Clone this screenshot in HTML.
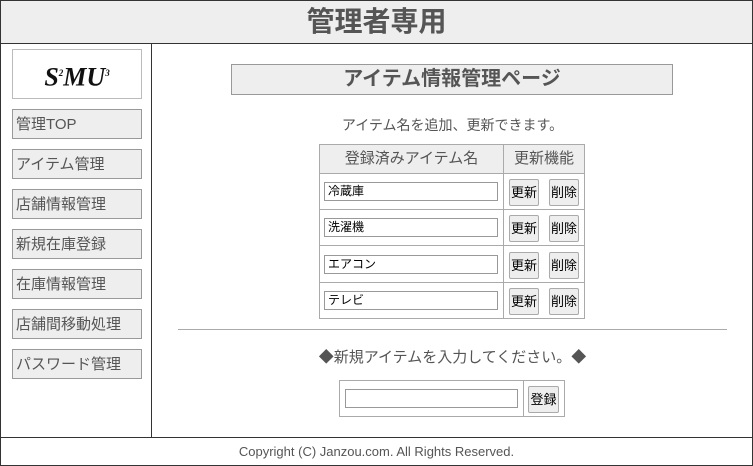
<!DOCTYPE html><html><head><meta charset="utf-8"><style>
*{margin:0;padding:0;box-sizing:border-box}
body{width:753px;height:466px;background:#fff;font-family:"Liberation Sans","Noto Sans CJK JP",sans-serif;color:#555;position:relative;overflow:hidden}
.a{position:absolute}
.nav{position:absolute;left:12px;width:130px;height:30px;background:#eee;border:1px solid #999;font-size:15px;line-height:30px;padding-left:3px;color:#555}
.inp{position:absolute;height:19px;border:1px solid #999;background:#fff;font-size:12px;line-height:17px;padding-left:3px;color:#000}
.btn{position:absolute;height:27px;background:#eee;border:1px solid #aaa;font-size:13px;line-height:25px;text-align:center;color:#000;border-radius:2px}
.ln{position:absolute;background:#aaa}
</style></head><body>
<div class="a" style="left:0;top:0;width:753px;height:466px;border:1px solid #333"></div>
<div class="a" style="left:1px;top:1px;width:751px;height:42px;background:#eee"></div>
<div class="a" style="left:0;top:43px;width:753px;height:1px;background:#333"></div>
<div class="a" style="left:0;top:4px;width:753px;text-align:center;font-size:28px;font-weight:bold;line-height:36px;color:#555">管理者専用</div>
<div class="a" style="left:151px;top:44px;width:1px;height:393px;background:#333"></div>
<div class="a" style="left:0;top:437px;width:753px;height:1px;background:#333"></div>
<div class="a" style="left:0;top:443px;width:753px;text-align:center;font-size:13px;line-height:18px">Copyright (C) Janzou.com. All Rights Reserved.</div>
<div class="a" style="left:12px;top:49px;width:130px;height:50px;border:1px solid #bbb;text-align:center;font:italic bold 26px 'Liberation Serif',serif;color:#111;line-height:46px">S<sup style="font-size:9px">2</sup>MU<sup style="font-size:9px">3</sup></div>
<div class="nav" style="top:109px">管理TOP</div>
<div class="nav" style="top:149px">アイテム管理</div>
<div class="nav" style="top:189px">店舗情報管理</div>
<div class="nav" style="top:229px">新規在庫登録</div>
<div class="nav" style="top:269px">在庫情報管理</div>
<div class="nav" style="top:309px">店舗間移動処理</div>
<div class="nav" style="top:349px">パスワード管理</div>
<div class="a" style="left:231px;top:64px;width:442px;height:31px;background:#eee;border:1px solid #999;text-align:center;font-size:20px;font-weight:bold;line-height:29px">アイテム情報管理ページ</div>
<div class="a" style="left:152px;top:115px;width:601px;text-align:center;font-size:14px;line-height:20px">アイテム名を追加、更新できます。</div>
<div class="a" style="left:319px;top:144px;width:266px;height:175px;border:1px solid #aaa"></div>
<div class="a" style="left:320px;top:145px;width:264px;height:28px;background:#eee"></div>
<div class="ln" style="left:503px;top:144px;width:1px;height:175px"></div>
<div class="ln" style="left:319px;top:173px;width:266px;height:1px"></div>
<div class="ln" style="left:319px;top:209px;width:266px;height:1px"></div>
<div class="ln" style="left:319px;top:245px;width:266px;height:1px"></div>
<div class="ln" style="left:319px;top:282px;width:266px;height:1px"></div>
<div class="a" style="left:320px;top:149px;width:183px;text-align:center;font-size:15px;line-height:20px">登録済みアイテム名</div>
<div class="a" style="left:504px;top:149px;width:80px;text-align:center;font-size:15px;line-height:20px">更新機能</div>
<div class="inp" style="left:324px;top:182px;width:174px">冷蔵庫</div>
<div class="inp" style="left:324px;top:218px;width:174px">洗濯機</div>
<div class="inp" style="left:324px;top:255px;width:174px">エアコン</div>
<div class="inp" style="left:324px;top:291px;width:174px">テレビ</div>
<div class="btn" style="left:509px;top:179px;width:30px">更新</div><div class="btn" style="left:549px;top:179px;width:30px">削除</div>
<div class="btn" style="left:509px;top:215px;width:30px">更新</div><div class="btn" style="left:549px;top:215px;width:30px">削除</div>
<div class="btn" style="left:509px;top:252px;width:30px">更新</div><div class="btn" style="left:549px;top:252px;width:30px">削除</div>
<div class="btn" style="left:509px;top:288px;width:30px">更新</div><div class="btn" style="left:549px;top:288px;width:30px">削除</div>
<div class="ln" style="left:178px;top:329px;width:549px;height:1px"></div>
<div class="a" style="left:152px;top:348px;width:601px;text-align:center;font-size:15px;line-height:20px">◆新規アイテムを入力してください。◆</div>
<div class="a" style="left:339px;top:380px;width:226px;height:37px;border:1px solid #aaa"></div>
<div class="ln" style="left:523px;top:380px;width:1px;height:37px"></div>
<div class="inp" style="left:345px;top:389px;width:173px"></div>
<div class="btn" style="left:528px;top:386px;width:31px">登録</div>
</body></html>
